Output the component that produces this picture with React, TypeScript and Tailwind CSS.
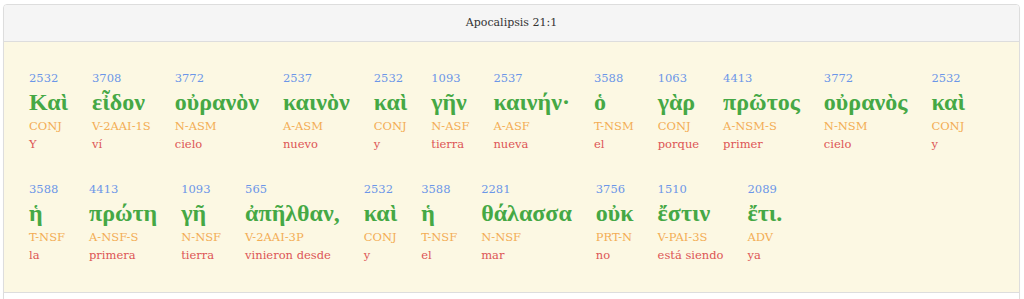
const words: [string, string, string, string][] = [
  ["2532", "Καὶ", "CONJ", "Y"],
  ["3708", "εἶδον", "V-2AAI-1S", "ví"],
  ["3772", "οὐρανὸν", "N-ASM", "cielo"],
  ["2537", "καινὸν", "A-ASM", "nuevo"],
  ["2532", "καὶ", "CONJ", "y"],
  ["1093", "γῆν", "N-ASF", "tierra"],
  ["2537", "καινήν·", "A-ASF", "nueva"],
  ["3588", "ὁ", "T-NSM", "el"],
  ["1063", "γὰρ", "CONJ", "porque"],
  ["4413", "πρῶτος", "A-NSM-S", "primer"],
  ["3772", "οὐρανὸς", "N-NSM", "cielo"],
  ["2532", "καὶ", "CONJ", "y"],
  ["3588", "ἡ", "T-NSF", "la"],
  ["4413", "πρώτη", "A-NSF-S", "primera"],
  ["1093", "γῆ", "N-NSF", "tierra"],
  ["565", "ἀπῆλθαν,", "V-2AAI-3P", "vinieron desde"],
  ["2532", "καὶ", "CONJ", "y"],
  ["3588", "ἡ", "T-NSF", "el"],
  ["2281", "θάλασσα", "N-NSF", "mar"],
  ["3756", "οὐκ", "PRT-N", "no"],
  ["1510", "ἔστιν", "V-PAI-3S", "está siendo"],
  ["2089", "ἔτι.", "ADV", "ya"],
];

export default function App() {
  return (
    <div className="min-h-screen bg-white pt-[4px] pl-[3px] pr-[4px] font-['DejaVu_Serif',Georgia,serif]">
      <div className="border border-[#dddddd] rounded-[4px] shadow-[0_1px_1px_rgba(0,0,0,0.05)] overflow-hidden">
        {/* Header */}
        <div className="bg-[#f5f5f5] border-b border-[#dddddd] h-[37px] flex items-center justify-center">
          <h3 className="text-[11px] text-[#333333]">Apocalipsis 21:1</h3>
        </div>

        {/* Interlinear */}
        <div className="bg-[#fcf8e3] pt-[27px] pb-[28px] pl-[25px] pr-[20px] flex flex-wrap gap-x-6 gap-y-[27px]">
          {words.map((w, i) => (
            <div key={i} className="flex flex-col">
              <span className="text-[11.5px] leading-[18px] text-[#6b96e8]">{w[0]}</span>
              <span className="font-['Liberation_Serif','DejaVu_Serif',serif] text-[24px] leading-[30px] font-bold text-[#45a845] whitespace-nowrap">
                {w[1]}
              </span>
              <span className="text-[11.5px] leading-[18px] text-[#f3ad55] whitespace-nowrap">{w[2]}</span>
              <span className="text-[11.5px] leading-[18px] text-[#dd5555] whitespace-nowrap">{w[3]}</span>
            </div>
          ))}
        </div>

        {/* Footer */}
        <div className="bg-white border-t border-[#dddddd] h-10"></div>
      </div>
    </div>
  );
}
